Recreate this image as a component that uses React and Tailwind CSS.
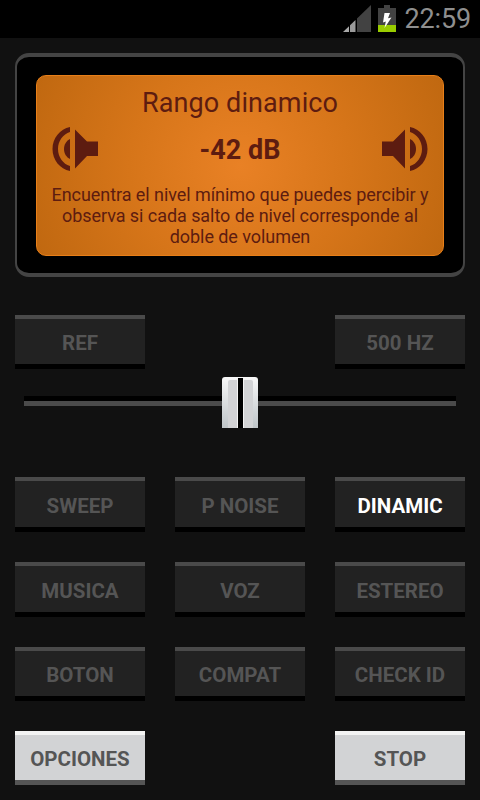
import clsx from "clsx";

const modes = [
  { label: "SWEEP" },
  { label: "P NOISE" },
  { label: "DINAMIC", active: true },
  { label: "MUSICA" },
  { label: "VOZ" },
  { label: "ESTEREO" },
  { label: "BOTON", short: true },
  { label: "COMPAT", short: true },
  { label: "CHECK ID", short: true },
];

function StatusBar() {
  return (
    <header className="flex h-[38px] items-start justify-end bg-black pr-[9px]">
      <svg className="mt-[5px] mr-[7px]" width="28" height="27" viewBox="0 0 28 27">
        <path d="M28 0V27H14V13.500Z" fill="#424242" />
        <path d="M6 21.2V27H0Z" fill="#a8a8a8" />
        <path d="M7 20.2L12.5 14.9V27H7Z" fill="#9a9a9a" />
      </svg>
      <svg className="mt-[5px] mr-[9px]" width="18" height="27" viewBox="0 0 18 27">
        <path d="M6 0H12V3H18V27H0V3H6Z" fill="#424242" />
        <path d="M0 20H18V27H0Z" fill="#99cc00" />
        <path d="M6.500 8H12L10 13.3L13.500 12.500L6.500 23L7.800 16.500L5 17.500Z" fill="#fff" />
      </svg>
      <span className="mt-[1px] text-[27px] leading-9 tracking-[-0.15px] text-[#8f8f8f]">
        22:59
      </span>
    </header>
  );
}

function Speaker({ flip }) {
  return (
    <svg
      className={clsx("h-11 w-[46px]", flip && "-scale-x-100")}
      viewBox="0 0 46 44"
      fill="#5d1c10"
    >
      <path d="M0 14.5H11L23 2.5V41.5L11 29H0Z" />
      <path d="M28 12C31.500 13.5 34 17.5 34 22S31.500 30.500 28 32Z" />
      <path d="M28 0C38 2 45.500 11 45.500 22S38 42 28 44V39C35 37 40 30 40 22S35 7 28 5Z" />
    </svg>
  );
}

function Display() {
  return (
    <section className="mx-[15px] mt-[15px] h-56 rounded-[14px] border-x-2 border-t-4 border-b-4 border-[#444] bg-black px-[19px] pt-[18px]">
      <div className="h-[181px] rounded-[10px] border border-[#e87f18] bg-[radial-gradient(circle_at_50%_50%,#e98125_0%,#d67519_50%,#c06810_100%)] px-[15px] text-center text-[#5d1c10]">
        <h1 className="pt-[11px] text-[27px] leading-8 tracking-[0.1px]">Rango dinamico</h1>
        <div className="mt-[8px] flex h-11 items-center justify-between">
          <Speaker flip />
          <p className="pt-[2px] text-[27px] font-bold leading-8">-42 dB</p>
          <Speaker />
        </div>
        <p className="-mx-2 mt-[13px] text-[18px] leading-[21px] tracking-[-0.06px]">
          Encuentra el nivel mínimo que puedes percibir y
          <br />
          observa si cada salto de nivel corresponde al
          <br />
          doble de volumen
        </p>
      </div>
    </section>
  );
}

function Button({ children, active, light, className = "h-[54px] pt-[2px]" }) {
  return (
    <button
      className={clsx(
        "w-[130px] border-t-4 border-b-[5px] text-[20.5px] font-bold leading-6",
        className,
        light
          ? "border-t-[#f3f3f3] border-b-[#555] bg-[#d2d3d5] text-[#555]"
          : "border-t-[#4a4a4a] border-b-black bg-[#222]",
        !light && (active ? "text-white" : "text-[#555]")
      )}
    >
      {children}
    </button>
  );
}

function Slider() {
  return (
    <div className="relative mx-6 h-[10px] border-t-[5px] border-black bg-[#4b4b4b]">
      <div className="absolute -top-6 left-[198px] flex h-[51px] w-9 rounded-t-[3px] bg-linear-to-b from-[#f8f8f8] to-[#bfc5c8] pt-[3px] pl-[6px]">
        <div className="w-[9px] rounded-tl-[2px] bg-[#d2d3d5]" />
        <div className="-mt-[2px] w-[7px] border-x border-[#f3f3f3] bg-black" />
        <div className="w-[9px] rounded-tr-[2px] bg-[#d2d3d5]" />
      </div>
    </div>
  );
}

export default function App() {
  return (
    <div className="h-[800px] w-[480px] overflow-hidden bg-[#111] font-[Roboto,sans-serif]">
      <StatusBar />
      <Display />
      <main className="pt-[38px]">
        <div className="flex justify-between px-[15px]">
          <Button>REF</Button>
          <Button>500 HZ</Button>
        </div>
        <div className="pt-[27px]">
          <Slider />
        </div>
        <div className="mt-[71px] grid grid-cols-[130px_130px_130px] grid-rows-[55px_55px_54px] gap-[30px] px-[15px]">
          {modes.map((mode) => (
            <Button
              key={mode.label}
              active={mode.active}
              className={mode.short ? "h-full pt-[2px]" : "h-full pt-[4px]"}
            >
              {mode.label}
            </Button>
          ))}
        </div>
        <div className="mt-[30px] flex justify-between px-[15px]">
          <Button light>OPCIONES</Button>
          <Button light>STOP</Button>
        </div>
      </main>
    </div>
  );
}
